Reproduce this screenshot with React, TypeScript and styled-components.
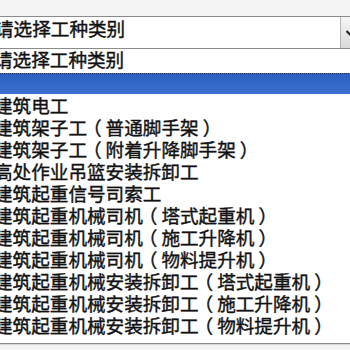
import styled, { createGlobalStyle } from "styled-components";

const GlobalStyle = createGlobalStyle`
  html, body {
    margin: 0;
    padding: 0;
    background: #f3f3f3;
    overflow: hidden;
  }
  body {
    font-family: "Noto Sans CJK SC", "Noto Sans", sans-serif;
  }
`;

const Page = styled.div`
  width: 350px;
  height: 350px;
  box-sizing: border-box;
  padding-top: 16px;
  overflow: hidden;
  background: #f3f3f3;
`;

/* the combo sticks out past both edges of the shot */
const Combo = styled.div`
  margin-left: -6px;
  width: 365px;
`;

const SelectBox = styled.div`
  display: flex;
  height: 33px;
  box-sizing: border-box;
  border: 1px solid #8b8b8b;
  background: #fff;
`;

const SelectText = styled.div`
  flex: 1;
  font-size: 18.6px;
  line-height: 22px;
  color: #111;
  -webkit-text-stroke: 0.4px #111;
  white-space: nowrap;
`;

const DropButton = styled.div`
  width: 17px;
  display: flex;
  align-items: center;
  justify-content: center;
  border-left: 1px solid #b4b4b4;
  background: linear-gradient(#f6f6f6, #dadada);
`;

const List = styled.div`
  background: #fff;
  border-bottom: 1px solid #8a8a8a;
  padding-bottom: 7px;
  box-shadow: 0 1px 0 #d6d6d6;
`;

const Option = styled.div<{ $first?: boolean }>`
  height: ${(p) => (p.$first ? "24px" : "22px")};
  line-height: ${(p) => (p.$first ? "20px" : "22px")};
  font-size: 18.6px;
  color: #111;
  -webkit-text-stroke: 0.4px #111;
  white-space: nowrap;
`;

const Selected = styled.div`
  height: 21px;
  box-sizing: border-box;
  border-top: 1px dotted #1d2c55;
  background: linear-gradient(#2c5fc0, #3a6fd0);
`;

const Paren = styled.span<{ $side: "open" | "close" }>`
  margin-left: ${(p) => (p.$side === "open" ? "-0.22em" : "0.22em")};
  margin-right: ${(p) => (p.$side === "open" ? "0.22em" : "-0.22em")};
`;

const items: [string, string?][] = [
  ["建筑电工"],
  ["建筑架子工", "普通脚手架"],
  ["建筑架子工", "附着升降脚手架"],
  ["高处作业吊篮安装拆卸工"],
  ["建筑起重信号司索工"],
  ["建筑起重机械司机", "塔式起重机"],
  ["建筑起重机械司机", "施工升降机"],
  ["建筑起重机械司机", "物料提升机"],
  ["建筑起重机械安装拆卸工", "塔式起重机"],
  ["建筑起重机械安装拆卸工", "施工升降机"],
  ["建筑起重机械安装拆卸工", "物料提升机"],
];

export default function App() {
  return (
    <Page>
      <GlobalStyle />
      <Combo>
        <SelectBox>
          <SelectText>请选择工种类别</SelectText>
          <DropButton>
            <svg width="8" height="6" viewBox="0 0 8 6">
              <path d="M0.5 1 L4 4.5 L7.5 1" fill="none" stroke="#222" strokeWidth="2" />
            </svg>
          </DropButton>
        </SelectBox>
        <List>
          <Option $first>请选择工种类别</Option>
          <Selected />
          {items.map(([name, sub], i) => (
            <Option key={i}>
              {name}
              {sub && (
                <>
                  <Paren $side="open">（</Paren>
                  {sub}
                  <Paren $side="close">）</Paren>
                </>
              )}
            </Option>
          ))}
        </List>
      </Combo>
    </Page>
  );
}
